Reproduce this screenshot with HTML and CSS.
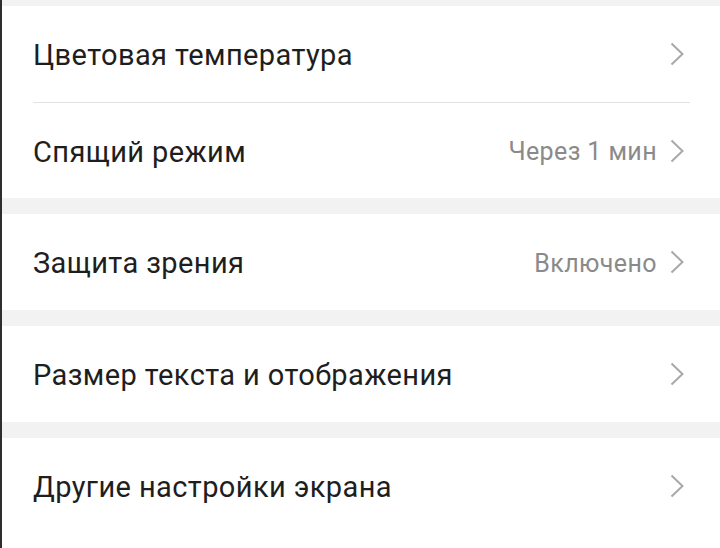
FILE: index.html
```html
<!DOCTYPE html>
<html lang="ru">
<head>
    <meta charset="UTF-8">
    <meta name="viewport" content="width=device-width, initial-scale=1.0">
    <title>Экран</title>
    <link rel="stylesheet" href="styles.css">
</head>
<body>
    <div class="screen">
        <div class="group">
            <div class="row">
                <span class="label">Цветовая температура</span>
                <svg class="chevron" viewBox="0 0 14 24"><path d="M1.5 1.5 L12.5 12 L1.5 22.5"/></svg>
            </div>
            <div class="row">
                <span class="label">Спящий режим</span>
                <span class="value">Через 1 мин</span>
                <svg class="chevron" viewBox="0 0 14 24"><path d="M1.5 1.5 L12.5 12 L1.5 22.5"/></svg>
            </div>
        </div>

        <div class="group">
            <div class="row">
                <span class="label">Защита зрения</span>
                <span class="value">Включено</span>
                <svg class="chevron" viewBox="0 0 14 24"><path d="M1.5 1.5 L12.5 12 L1.5 22.5"/></svg>
            </div>
        </div>

        <div class="group">
            <div class="row">
                <span class="label">Размер текста и отображения</span>
                <svg class="chevron" viewBox="0 0 14 24"><path d="M1.5 1.5 L12.5 12 L1.5 22.5"/></svg>
            </div>
        </div>

        <div class="group last">
            <div class="row">
                <span class="label">Другие настройки экрана</span>
                <svg class="chevron" viewBox="0 0 14 24"><path d="M1.5 1.5 L12.5 12 L1.5 22.5"/></svg>
            </div>
        </div>
    </div>
</body>
</html>
```

FILE: styles.css
```css
body {
    font-family: Roboto, "Noto Sans", Arial, sans-serif;
    background-color: #f2f2f2;
    margin: 0;
    padding: 0;
}
.screen {
    border-left: 2px solid #2e2e2e;
    height: 548px;
    padding-top: 6px;
    box-sizing: border-box;
    display: flex;
    flex-direction: column;
    gap: 16px;
    overflow: hidden;
}
.group {
    background-color: #fff;
    padding-left: 31px;
}
.group.last {
    flex: 1;
}
.row {
    display: flex;
    align-items: center;
    height: 96px;
    padding-top: 2px;
    padding-right: 36px;
    box-sizing: border-box;
}
.row + .row {
    border-top: 1px solid #e2e2e2;
    margin-right: 30px;
    padding-right: 6px;
}
.label {
    flex: 1;
    font-size: 29px;
    letter-spacing: 0.4px;
    color: #1e1e1e;
}
.value {
    font-size: 25px;
    letter-spacing: 0.4px;
    color: #8a8a8a;
    margin-right: 13px;
}
.chevron {
    width: 14px;
    height: 24px;
    margin-top: -2px;
    fill: none;
    stroke: #a8a8a8;
    stroke-width: 2;
}
```
